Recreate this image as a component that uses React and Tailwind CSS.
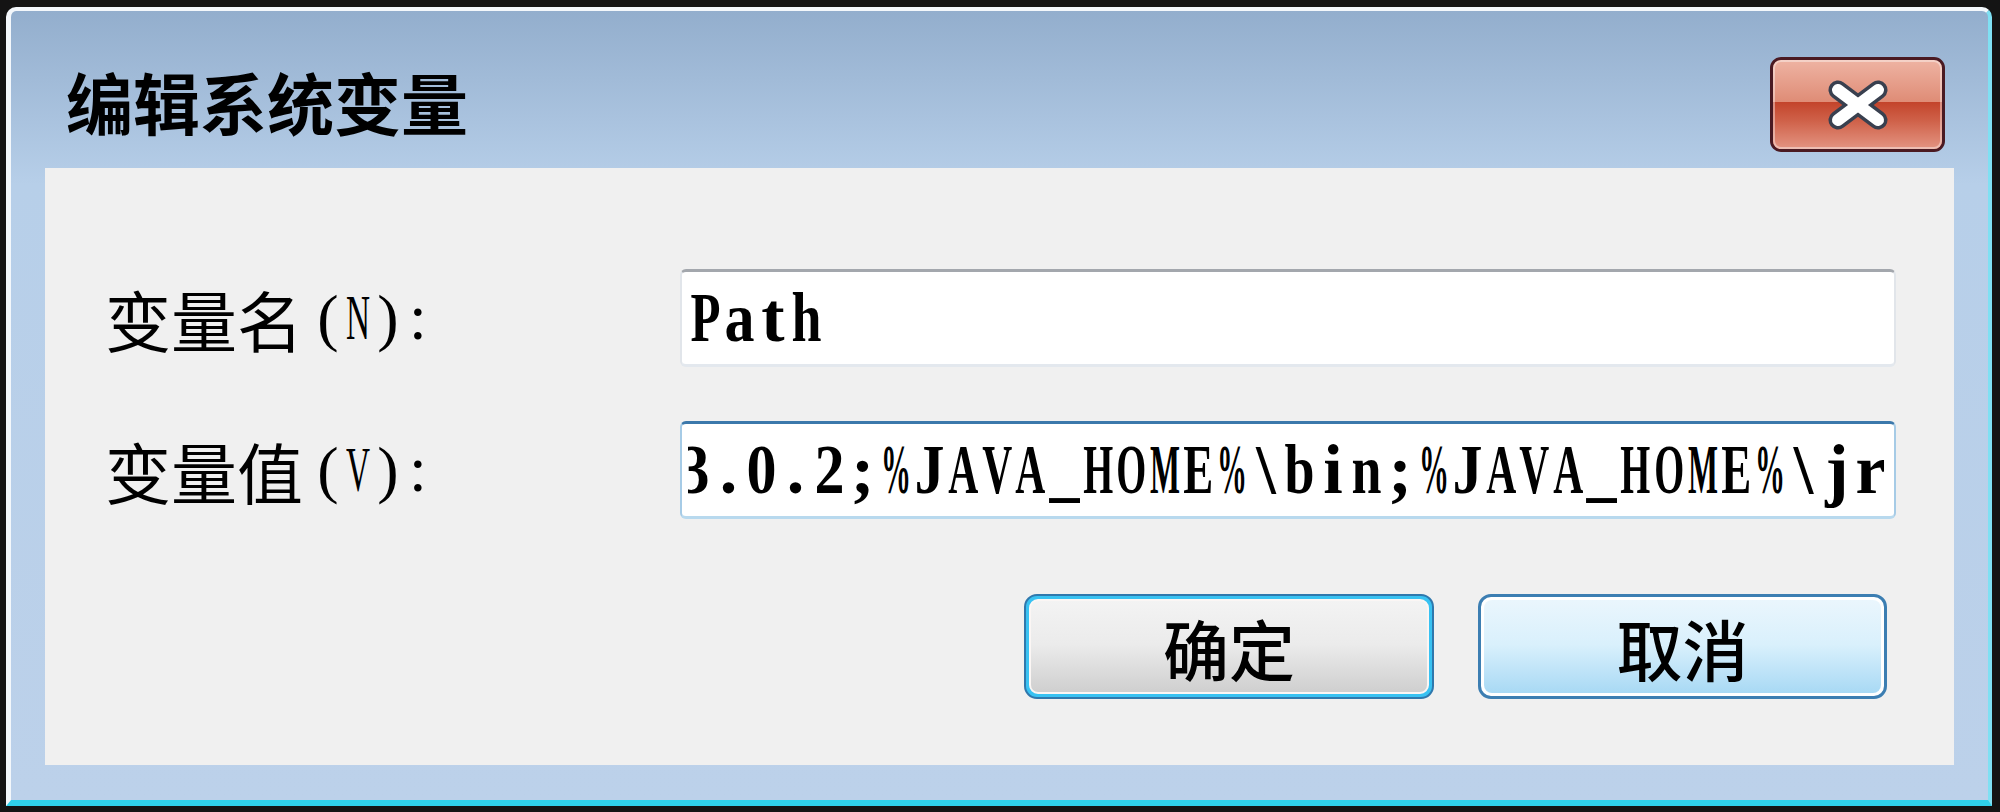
import React from 'react'

const CJK = "font-['Noto_Sans_CJK_SC','Noto_Sans',sans-serif]"

// advance widths (em) of Liberation Serif, used to squeeze each glyph into a fixed cell
const ADV = {
  P: 0.611, a: 0.5, t: 0.333, h: 0.556, '3': 0.5, '.': 0.25, '0': 0.5, '2': 0.5,
  ';': 0.333, '%': 1.0, J: 0.5, A: 0.722, V: 0.722, _: 0.5, H: 0.778, O: 0.778,
  M: 0.944, E: 0.667, '\\': 0.278, b: 0.556, i: 0.278, n: 0.556, j: 0.333,
  r: 0.444, e: 0.444, N: 0.722, '(': 0.333, ')': 0.333, ':': 0.333,
}

// fixed-pitch text drawn with a serif face, one cell per character
function CellText({ text, size, fit, cellClass, fontClass }) {
  return (
    <span className="inline-flex whitespace-pre">
      {[...text].map((ch, i) => {
        const s = Math.min(1, fit / ((ADV[ch] ?? 0.5) * size))
        return (
          <span key={i} className={'inline-flex justify-center shrink-0 ' + cellClass}>
            <span className={'inline-block ' + fontClass} style={{ transform: `scaleX(${s})` }}>
              {ch}
            </span>
          </span>
        )
      })}
    </span>
  )
}

function CloseGlyph() {
  return (
    <svg width="62" height="50" viewBox="0 0 62 50">
      <g strokeLinecap="round">
        <line x1="11" y1="10" x2="51" y2="40" stroke="#39404f" strokeWidth="19" />
        <line x1="51" y1="10" x2="11" y2="40" stroke="#39404f" strokeWidth="19" />
        <line x1="11" y1="10" x2="51" y2="40" stroke="#ffffff" strokeWidth="12" />
        <line x1="51" y1="10" x2="11" y2="40" stroke="#ffffff" strokeWidth="12" />
      </g>
    </svg>
  )
}

function Field({ label, hotkey, focused, children }) {
  return (
    <div className="flex items-center">
      <div className="w-[575px] flex items-center text-black">
        <span className={CJK + ' text-[66px] leading-none'}>{label}</span>
        <span className="ml-[10px] flex">
          <CellText
            text={`(${hotkey}):`}
            size={64}
            fit={24}
            cellClass="w-[30px]"
            fontClass="font-['Liberation_Serif',serif] text-[64px] leading-none"
          />
        </span>
      </div>
      <div
        className={
          'flex-1 h-[98px] rounded-[6px] bg-white flex ' +
          (focused
            ? 'border-t-[3px] border-x-[2px] border-b-[3px] border-t-[#3b78ab] border-x-[#a6cbe6] border-b-[#b8d9ee]'
            : 'border-t-[3px] border-x-[2px] border-b-[3px] border-t-[#a3a7ad] border-x-[#e1e5ea] border-b-[#e3e8ee]')
        }
      >
        <div className="flex-1 mx-[6px] flex items-center overflow-hidden">{children}</div>
      </div>
    </div>
  )
}

const MONO_FONT = "font-['Liberation_Serif',serif] font-bold text-[70px] leading-none text-black"

export default function App() {
  return (
    <div className="w-[2000px] h-[812px] bg-[#141414] pt-[7px] pl-[6px] pr-[8px] pb-[6px]">
      <div className="h-full flex flex-col rounded-t-[10px] border-t-[4px] border-l-[5px] border-r-[4px] border-b-[6px] border-t-[#f3f7fb] border-l-[#f3f7fb] border-r-[#7fe0f3] border-b-[#2fd0ea] bg-linear-to-b from-[#93aecd] via-[#b7cfe9] via-[22%] to-[#bcd1ea]">
        {/* Title bar */}
        <div className="h-[157px] pt-[22px] pl-[55px] pr-[43px] flex items-center justify-between">
          <span className={CJK + ' text-[67px] leading-none font-semibold text-black'}>编辑系统变量</span>
          <button
            type="button"
            aria-label="Close"
            className="mt-[8px] w-[175px] h-[95px] rounded-[11px] border-[3px] border-[#4a1a22] bg-linear-to-b from-[#eeb3a3] via-[#df8d77] via-[46%] to-[#dc8671] relative overflow-hidden flex items-center justify-center"
          >
            <span className="absolute inset-x-0 top-[47%] bottom-0 bg-linear-to-b from-[#c3432a] via-[#cf6149] via-[40%] to-[#e39482]" />
            <span className="absolute inset-0 rounded-[8px] border-[2px] border-white/40" />
            <span className="relative flex">
              <CloseGlyph />
            </span>
          </button>
        </div>

        {/* Client area */}
        <div className="flex-1 mx-[34px] mb-[35px] bg-[#f0f0f0] pt-[101px] pl-[60px] pr-[58px] flex flex-col">
          <Field label="变量名" hotkey="N">
            <span className="ml-[1px] flex">
              <CellText text="Path" size={70} fit={30} cellClass="w-[33.6px]" fontClass={MONO_FONT} />
            </span>
          </Field>
          <div className="h-[54px]" />
          <Field label="变量值" hotkey="V" focused>
            <span className="ml-[-10px] flex">
              <CellText
                text={'3.0.2;%JAVA_HOME%\\bin;%JAVA_HOME%\\jr'}
                size={70}
                fit={30}
                cellClass="w-[33.6px]"
                fontClass={MONO_FONT}
              />
            </span>
          </Field>

          <div className="mt-[75px] pr-[9px] flex justify-end gap-[44px]">
            <button
              type="button"
              className="w-[410px] h-[105px] rounded-[13px] border-[2px] border-[#2f78ad] p-[3px] bg-[#38c2f2]"
            >
              <div className="h-full rounded-[9px] border-[2px] border-[#fbf6f4] bg-linear-to-b from-[#f3f3f3] via-[#ebebeb] via-[48%] to-[#cfcfcf] flex items-center justify-center">
                <span className={CJK + ' text-[66px] leading-none font-medium text-black'}>确定</span>
              </div>
            </button>
            <button
              type="button"
              className="w-[409px] h-[105px] rounded-[13px] border-[3px] border-[#3c7eb2] bg-white p-[3px]"
            >
              <div className="h-full rounded-[8px] bg-linear-to-b from-[#eaf6fd] via-[#d9f0fc] via-[48%] to-[#a8d9f4] flex items-center justify-center">
                <span className={CJK + ' text-[66px] leading-none font-medium text-black'}>取消</span>
              </div>
            </button>
          </div>
        </div>
      </div>
    </div>
  )
}
